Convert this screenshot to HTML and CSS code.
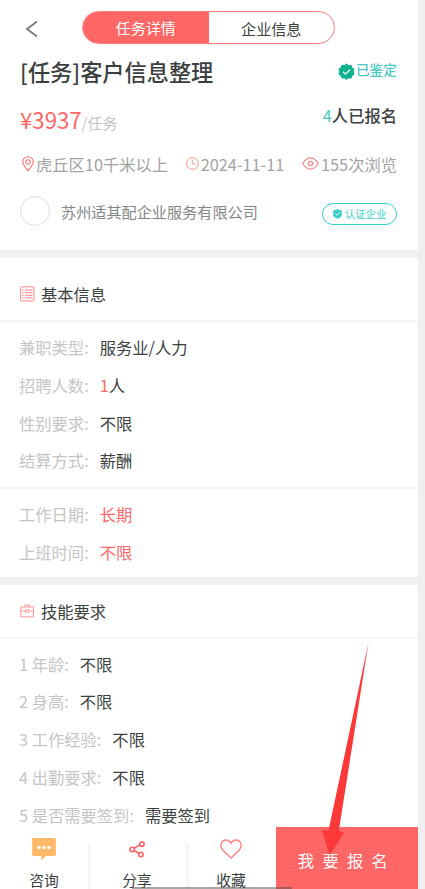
FILE: index.html
```html
<!DOCTYPE html>
<html lang="zh-CN">
<head>
  <meta charset="UTF-8">
  <meta name="viewport" content="width=device-width, initial-scale=1.0">
  <title>任务详情</title>
  <link rel="stylesheet" href="styles.css">
</head>
<body>
  <div class="page">
    <header class="header">
      <svg class="back" width="14" height="18" viewBox="0 0 14 18" fill="none" stroke="#777" stroke-width="1.8"><path d="M12 1.5 2 9l10 7.5"/></svg>
      <div class="tabs">
        <div class="tab active">任务详情</div>
        <div class="tab">企业信息</div>
      </div>
    </header>

    <section class="summary">
      <div class="title-row">
        <h1>[任务]客户信息整理</h1>
        <div class="verified">
          <svg width="17" height="17" viewBox="0 0 17 17"><path fill="#0bb38e" stroke="#0bb38e" stroke-width="1" stroke-linejoin="round" d="m8.5 1 2 1.5 2.6-.2.9 2.5 2.1 1.5-.8 2.4.8 2.4-2.1 1.5-.9 2.4-2.6-.1-2 1.5-2-1.5-2.6.1-.9-2.4L.9 11.1l.8-2.4L.9 6.3 3 4.8l.9-2.5 2.6.2z"/><path d="m5 8.7 2.5 2.5 4.6-4.7" fill="none" stroke="#fff" stroke-width="1.3"/></svg>
          <span>已鉴定</span>
        </div>
      </div>
      <div class="price-row">
        <div class="price">¥3937<small>/任务</small></div>
        <div class="joined"><em>4</em>人已报名</div>
      </div>
      <div class="meta-row">
        <div class="meta">
          <svg width="12" height="16" viewBox="0 0 12 16" fill="none" stroke="#ff7272" stroke-width="1.1"><path d="M6 14.8C3.5 11.5.8 8.6.8 5.9a5.2 5.2 0 0 1 10.4 0C11.2 8.6 8.5 11.5 6 14.8z"/><circle cx="6" cy="6" r="2.2"/></svg>
          <span>虎丘区10千米以上</span>
        </div>
        <div class="meta">
          <svg width="13" height="13" viewBox="0 0 13 13" fill="none" stroke="#ff8f8f"><circle cx="6.5" cy="6.5" r="5.8"/><path d="M6.3 3v4h3"/></svg>
          <span>2024-11-11</span>
        </div>
        <div class="meta">
          <svg width="17" height="13" viewBox="0 0 17 13" fill="none" stroke="#ff8585" stroke-width="1.2"><path d="M.7 6.5C3.2 2.6 5.6.8 8.5.8s5.3 1.8 7.8 5.7c-2.5 3.9-4.9 5.7-7.8 5.7S3.2 10.4.7 6.5z"/><circle cx="8.5" cy="6.5" r="2.2"/></svg>
          <span>155次浏览</span>
        </div>
      </div>
      <div class="company-row">
        <div class="avatar"></div>
        <div class="company">苏州适其配企业服务有限公司</div>
        <div class="badge">
          <svg width="9" height="10" viewBox="0 0 9 10"><path fill="#35d1c9" d="M4.5.2 8.8 1.4v4.2C8.8 7.8 6.8 9 4.5 9.8 2.2 9 .2 7.8.2 5.6V1.4z"/><path d="m2.4 4.6 1.7 1.6 2.7-2.7" fill="none" stroke="#fff"/></svg>
          <span>认证企业</span>
        </div>
      </div>
    </section>

    <section class="block">
      <h2>
        <svg width="15" height="16" viewBox="0 0 15 16" fill="none" stroke="#ff8585"><rect x=".6" y=".8" width="13.4" height="14.2" rx="1"/><path d="M5 4h7.5M5 6.7h7.5M5 9.3h7.5M5 12h7.5M2.3 4h1.5M2.3 6.7h1.5M2.3 9.3h1.5M2.3 12h1.5"/></svg>
        基本信息
      </h2>
      <div class="rows">
        <div class="row"><span class="label">兼职类型:</span><span>服务业/人力</span></div>
        <div class="row"><span class="label">招聘人数:</span><span><em>1</em>人</span></div>
        <div class="row"><span class="label">性别要求:</span><span>不限</span></div>
        <div class="row"><span class="label">结算方式:</span><span>薪酬</span></div>
      </div>
      <div class="rows time">
        <div class="row"><span class="label">工作日期:</span><em>长期</em></div>
        <div class="row"><span class="label">上班时间:</span><em>不限</em></div>
      </div>
    </section>

    <section class="block">
      <h2>
        <svg width="15" height="14" viewBox="0 0 15 14" fill="none" stroke="#ff9a9a"><rect x=".8" y="3" width="12.7" height="9.8"/><path d="M4.8 3V1h4.7v2M.8 7h4.7M9 7h4.5"/><rect x="5.5" y="5.8" width="3.4" height="2.4"/></svg>
        技能要求
      </h2>
      <div class="rows">
        <div class="row"><span class="label">1 年龄:</span><span>不限</span></div>
        <div class="row"><span class="label">2 身高:</span><span>不限</span></div>
        <div class="row"><span class="label">3 工作经验:</span><span>不限</span></div>
        <div class="row"><span class="label">4 出勤要求:</span><span>不限</span></div>
        <div class="row"><span class="label">5 是否需要签到:</span><span>需要签到</span></div>
      </div>
    </section>

    <footer class="footer">
      <div class="action">
        <svg width="24" height="23" viewBox="0 0 24 23"><path fill="#ffb968" d="M1.5 0h21a1.3 1.3 0 0 1 1.3 1.3v15.4a1.3 1.3 0 0 1-1.3 1.3H14l-4.7 4.3V18H1.5A1.3 1.3 0 0 1 .2 16.7V1.3A1.3 1.3 0 0 1 1.5 0z"/><g fill="#fff"><circle cx="7" cy="9.5" r="1.7"/><circle cx="12" cy="9.5" r="1.7"/><circle cx="17" cy="9.5" r="1.7"/></g></svg>
        <span>咨询</span>
      </div>
      <div class="action">
        <svg width="16" height="23" viewBox="0 0 16 23" fill="none" stroke="#ff5f5f" stroke-width="1.6"><path d="m5 10.4 5.8-3.7M5 12.4l4.7 2.9"/><circle cx="3.2" cy="11.4" r="2.2"/><circle cx="12.9" cy="6.2" r="2.2"/><circle cx="11.8" cy="16.5" r="2.2"/></svg>
        <span>分享</span>
      </div>
      <div class="action">
        <svg width="22" height="23" viewBox="0 0 22 23" fill="none" stroke="#ff8080" stroke-width="1.4"><path d="M11 20 2.7 12C-.8 8.3 1.3 2 6 2c2.300 0 4 1.200 5 3.200C12 3.200 13.700 2 16 2c4.700 0 6.800 6.300 3.300 10z"/></svg>
        <span>收藏</span>
      </div>
      <button type="button" class="apply">我要报名</button>
      <div class="home-bar"></div>
    </footer>

    <svg class="arrow" width="50" height="215" viewBox="0 0 50 215"><path fill="#fd3838" d="M48.5.5 18.8 189l5.4 1.7L9.500 213 1.800 188l6.700.500z"/></svg>
  </div>
</body>
</html>
```

FILE: styles.css
```css
* {
  box-sizing: border-box;
}
body {
  margin: 0;
  background: #efefef;
  color: #3c3f3f;
  font-family: "Noto Sans CJK SC", sans-serif;
  font-size: 16.3px;
}
svg {
  display: block;
  flex: none;
}
em {
  font-style: normal;
  color: #ff6666;
}
.page {
  position: relative;
  display: flex;
  flex-direction: column;
  width: 418px;
  height: 889px;
  overflow: hidden;
  background: #fff;
}
.header {
  display: flex;
  align-items: center;
  height: 55px;
  padding-left: 25px;
}
.back {
  margin-top: 2px;
}
.tabs {
  display: flex;
  width: 253px;
  height: 33px;
  margin-left: 43px;
  border: 1px solid #ff7b7b;
  border-radius: 17px;
  overflow: hidden;
}
.tab {
  flex: 1;
  font-size: 15.1px;
  line-height: 33px;
  text-align: center;
}
.tab.active {
  background: #ff6666;
  color: #fff;
  line-height: 31px;
}
.summary {
  height: 203px;
  padding: 0 21px 0 20px;
  border-bottom: 8px solid #f0f0f0;
}
.title-row,
.price-row,
.meta-row,
.company-row {
  display: flex;
  align-items: center;
  justify-content: space-between;
  white-space: nowrap;
}
.title-row {
  height: 31px;
}
h1 {
  margin: 0;
  font-size: 22.2px;
  font-weight: 500;
}
.verified {
  display: flex;
  align-items: center;
  color: #49c9c5;
  font-size: 13.7px;
  font-weight: 500;
}
.verified svg {
  margin-top: 2px;
}
.verified span {
  margin: -3px 0 0 1px;
}
.price-row {
  height: 66px;
}
.price {
  color: #ff6666;
  font-size: 22.2px;
}
.price small {
  color: #c4c4c4;
  font-size: 15px;
}
.joined {
  margin-top: -9px;
  font-weight: 500;
}
.joined em {
  color: #49c9c5;
  font-weight: 400;
}
.meta-row {
  height: 23px;
  padding-left: 2px;
  color: #a3a3a3;
}
.meta {
  display: flex;
  align-items: center;
  gap: 2px;
}
.company-row {
  height: 72px;
}
.avatar {
  width: 30px;
  height: 30px;
  border: 1px solid #ddd;
  border-radius: 50%;
}
.company {
  flex: 1;
  margin: 0 0 0 11px;
  color: #858585;
  font-size: 15.15px;
}
.badge {
  display: flex;
  align-items: center;
  justify-content: center;
  gap: 3px;
  width: 75px;
  height: 22px;
  margin-top: 5px;
  border: 1px solid #35d1c9;
  border-radius: 11px;
  color: #35d1c9;
  font-size: 10.4px;
}
.block {
  border-bottom: 8px solid #f0f0f0;
}
.block h2 {
  display: flex;
  align-items: center;
  gap: 6px;
  height: 64px;
  margin: 0;
  padding: 10px 20px 0;
  border-bottom: 2px solid #f5f5f5;
  font-size: 16.3px;
  font-weight: 400;
}
.rows {
  padding: 7px 19px;
}
.row {
  display: flex;
  gap: 11px;
  height: 37.75px;
  line-height: 37.75px;
}
.label {
  color: #c5c5c5;
}
.time {
  padding: 7px 19px 5px;
  border-top: 2px solid #f5f5f5;
}
.block + .block {
  border-bottom: 0;
}
.block + .block h2 {
  height: 54px;
  padding-top: 0;
}
.footer {
  position: absolute;
  left: 0;
  bottom: 0;
  display: grid;
  grid-template-columns: 88px 98px 90px 142px;
  width: 100%;
  height: 62px;
}
.action {
  display: flex;
  flex-direction: column;
  align-items: center;
  gap: 9px;
  height: 62px;
  padding-top: 11px;
  font-size: 14.8px;
  line-height: 20px;
}
.action + .action {
  background: linear-gradient(#f6f6f6, #f6f6f6) 0 16px / 3px 46px no-repeat;
}
.apply {
  padding: 4px 0 0;
  border: 0;
  background: #ff6666;
  color: #fff;
  font-family: inherit;
  font-size: 16.3px;
  letter-spacing: 8.3px;
}
.home-bar {
  position: absolute;
  left: 132px;
  bottom: 0;
  width: 160px;
  height: 2px;
  background: rgba(80, 80, 80, 0.5);
}
.arrow {
  position: absolute;
  left: 320px;
  top: 642px;
}
```
